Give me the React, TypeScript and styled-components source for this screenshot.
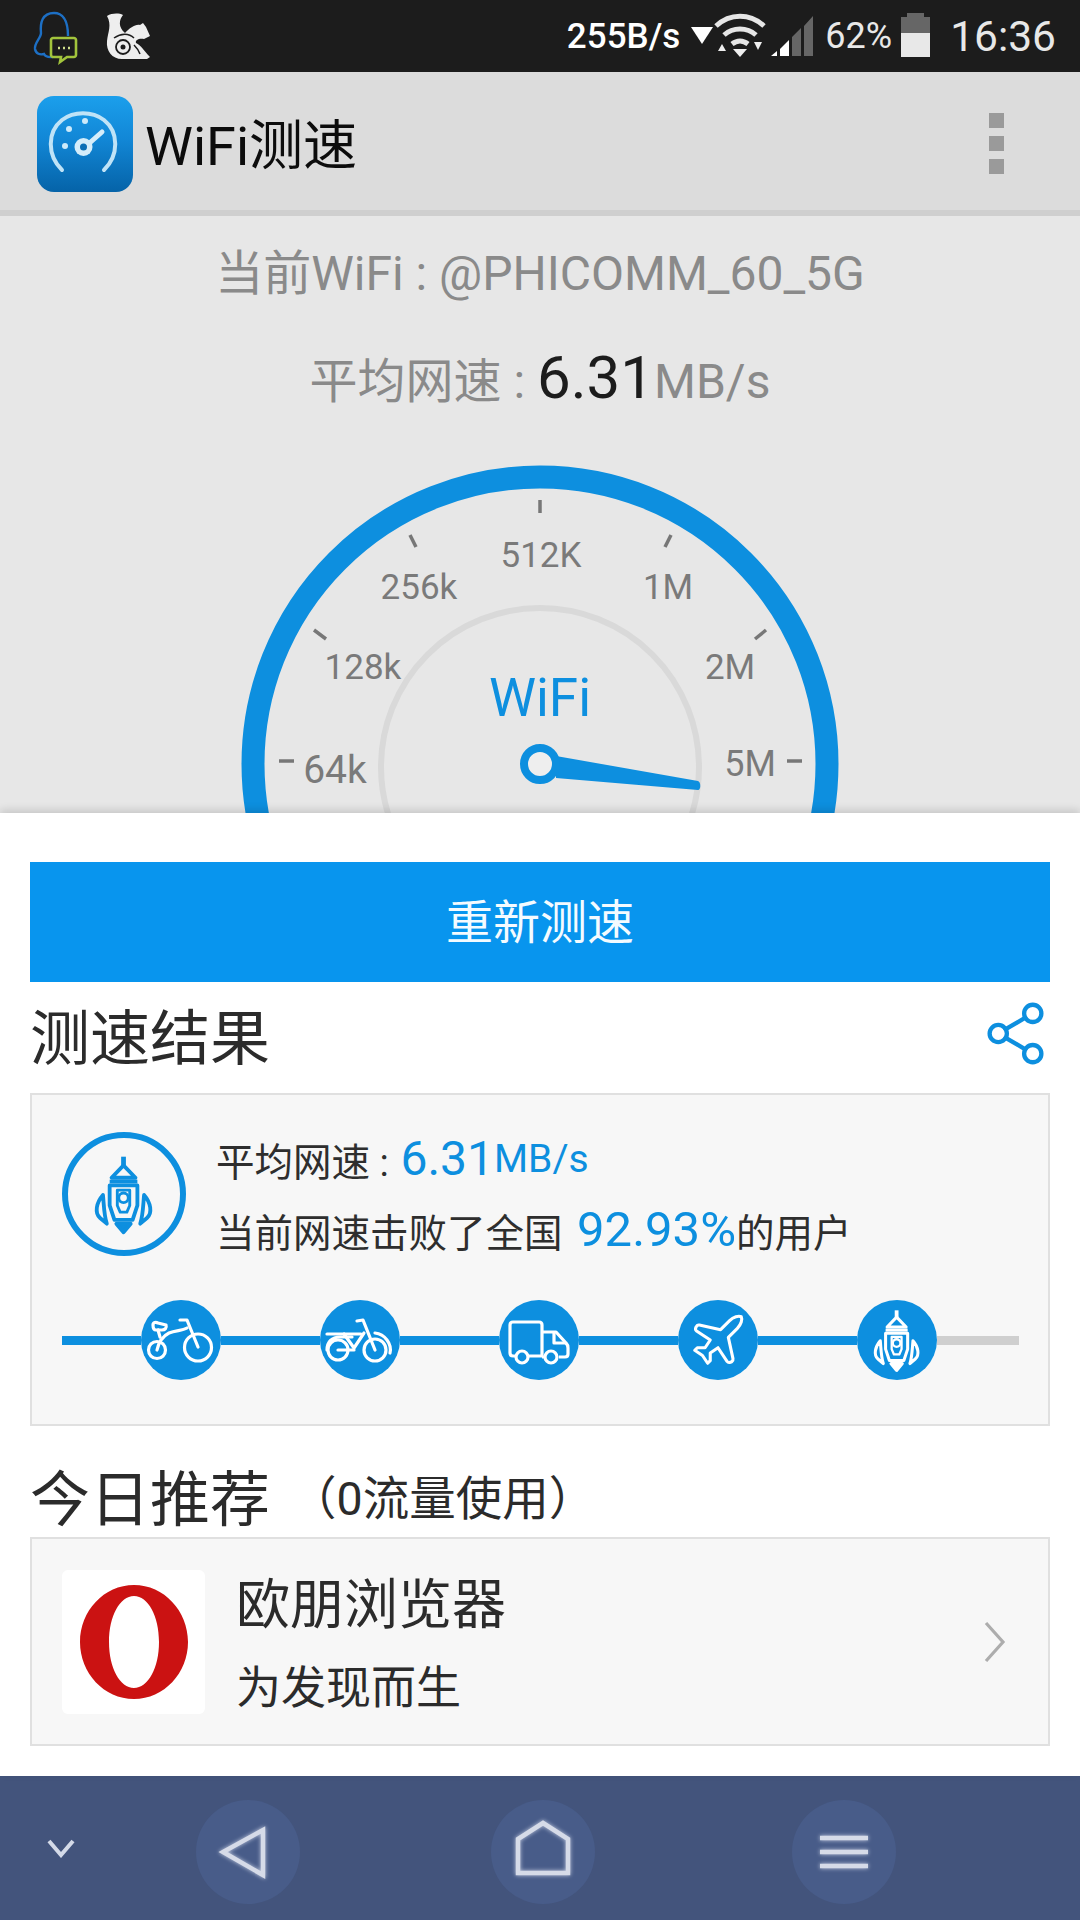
import React from 'react';
import styled, { createGlobalStyle } from 'styled-components';
import { Plane, Share2 } from 'lucide-react';

const FONT = `Roboto, "Noto Sans CJK SC", sans-serif`;
const BLUE = '#0d8fdf';

const GlobalStyle = createGlobalStyle`
  html, body {
    margin: 0;
    padding: 0;
    background: #fff;
    font-family: ${FONT};
  }
`;

const Rocket = ({ size, color }: { size: number; color: string }) => (
  <svg width={size} height={size} viewBox="30 22 78 92" fill="none" stroke={color} strokeWidth="4" strokeLinejoin="round">
    <path d="M68.5 29v9" strokeWidth="5" />
    <path d="M68.5 38 56 51h25z" />
    <path d="M54 55h29" />
    <path d="M54 59h29v21l-5 15H59l-5-15z" />
    <path d="M62 64h13v16l-3 7h-7l-3-7z" strokeWidth="3" />
    <circle cx="68.5" cy="72" r="5" strokeWidth="3" />
    <path d="M47 69c-7 8-9 19-3 24l7 6c-3-9-3-20-4-30zM90 69c7 8 9 19 3 24l-7 6c3-9 3-20 4-30z" />
    <path d="M61 99h15l-7.500 9z" fill={color} />
  </svg>
);

const Bicycle = () => (
  <svg width="80" height="80" viewBox="0 0 80 80" fill="none" stroke="#fff" strokeWidth="3.2" strokeLinecap="round" strokeLinejoin="round">
    <circle cx="16" cy="50" r="8.500" />
    <circle cx="57" cy="47.500" r="13.500" />
    <path d="M16 50c2-9 6-14 12-17 7-3 13-2 18-5" />
    <path d="M39 20h7l11 27" />
    <path d="M12 25c0-3 3-3 5-2l8 2c1 3-1 5-4 5h-6c-2 0-3-2-3-5z" />
    <path d="M17 30l2 7" />
  </svg>
);

const Motorbike = () => (
  <svg width="80" height="80" viewBox="0 0 80 80" fill="none" stroke="#fff" strokeWidth="3.2" strokeLinecap="round" strokeLinejoin="round">
    <circle cx="18" cy="50" r="10" />
    <circle cx="55" cy="50" r="11" />
    <path d="M7 50c0-8 5-13 13-13h12" />
    <path d="M70 53c2-9-5-19-15-20" />
    <path d="M37 21l6-1 12 30" />
    <path d="M7 34h34" />
    <path d="M24 34l10 14 10-15" />
    <path d="M18 50h16" />
  </svg>
);

const Truck = () => (
  <svg width="80" height="80" viewBox="0 0 80 80" fill="none" stroke="#fff" strokeWidth="3.200" strokeLinejoin="round">
    <path d="M16 56h-2c-2 0-3-1-3-3V25c0-2 1-3 3-3h26c2 0 3 1 3 3v31H29" />
    <path d="M43 32h14l10 11c1 1 2 3 2 5v6c0 2-1 3-3 3h-6M46 57h-3" />
    <path d="M55 33v10h12" />
    <circle cx="23" cy="57" r="6" />
    <circle cx="52" cy="57" r="6" />
  </svg>
);

const QQIcon = () => (
  <svg width="60" height="60" viewBox="0 0 60 60" fill="none">
    <path d="M48 31C48 14 42 8 34 8 22 8 20 18 21 28c0 5-7 10-6 16 1 5 5 6 9 5 2 4 6 3 9 3" stroke="#1d6fc4" strokeWidth="2.400" />
    <path d="M33 33h21c1 0 2 1 2 2v15c0 1-1 2-2 2H47l-7 5 1-5h-8c-1 0-2-1-2-2V35c0-1 1-2 2-2z" fill="#1c1c1c" stroke="#a2c43c" strokeWidth="2.600" />
    <path d="M38 43h2M43 43h2M48 43h2" stroke="#cfe08a" strokeWidth="2.600" />
  </svg>
);

const UCIcon = () => (
  <svg width="48" height="48" viewBox="83 8 46 48">
    <path
      d="M85 12c5-3 12-3 16-1-4 5-5 12 2 18 5-5 10-9 15-8l3-2 3 4 4 9-6 3c-5-1-9 1-8 4 5 2 8 8 14 14l-3 2H100c-10 0-16-8-15-18 1-9 5-16 0-25z"
      fill="#eee"
    />
    <circle cx="101" cy="43" r="7" fill="none" stroke="#1c1c1c" strokeWidth="1.800" />
    <circle cx="101" cy="43" r="2.500" fill="#1c1c1c" />
    <path d="M92 34c7-5 15-5 20 0M112 41c3 3 5 6 6 9" fill="none" stroke="#1c1c1c" strokeWidth="1.500" />
  </svg>
);

const NetIcons = () => (
  <svg width="132" height="65" viewBox="0 0 132 65">
    <path d="M8 23h22l-11 17z" fill="#fff" />
    <g fill="none" stroke="#e6e6e6" strokeWidth="5">
      <path d="M33 22c14-13 34-13 48 0" />
      <path d="M41 31c9-8 23-8 32 0" />
      <path d="M49 40c5-4 11-4 16 0" />
    </g>
    <path d="M50 45h14l-7 8z" fill="#eee" />
    <path d="M35 47l4-7 4 7zM71 38h8l-4 8z" fill="#eee" />
    <path d="M88 52l6-5v5z" fill="#fff" />
    <path d="M97 52V45l9-9v16z" fill="#fff" />
    <path d="M109 52V33l9-9v28zM121 52V22l9-10v40z" fill="#666" />
  </svg>
);

const BatteryIcon = () => (
  <svg width="29" height="46" viewBox="0 0 29 46">
    <path d="M6 0h17v4h6v16H0V4h6z" fill="#666" />
    <path d="M0 20h29v24H0z" fill="#e8e8e8" />
  </svg>
);

const AppLogo = () => (
  <LogoSvg width="96" height="96" viewBox="0 0 96 96">
    <defs>
      <linearGradient id="appBg" x1="0" y1="0" x2="0" y2="1">
        <stop offset="0" stopColor="#1b9fec" />
        <stop offset="0.45" stopColor="#1287d6" />
        <stop offset="1" stopColor="#0563a8" />
      </linearGradient>
    </defs>
    <rect width="96" height="96" rx="17" fill="url(#appBg)" />
    <path d="M25 74C10 59 10 36 25 24c12-9 30-9 42 0 15 12 15 35 0 50" fill="none" stroke="#bfe3f7" strokeWidth="4" strokeLinecap="round" />
    <circle cx="28" cy="50" r="3" fill="#cdeafa" />
    <circle cx="32" cy="33" r="3" fill="#cdeafa" />
    <circle cx="48" cy="25" r="3" fill="#cdeafa" />
    <path d="M48 51l17-15" stroke="#d5edfa" strokeWidth="5" strokeLinecap="round" />
    <circle cx="46.500" cy="51" r="9" fill="#d5edfa" />
    <circle cx="46.500" cy="51" r="3.500" fill="#0b6fb6" />
  </LogoSvg>
);

const gaugeLabels = [
  { text: '512K', x: 541, y: 567, size: 35 },
  { text: '256k', x: 419, y: 599, size: 35 },
  { text: '1M', x: 668, y: 599, size: 35 },
  { text: '128k', x: 363, y: 679, size: 35 },
  { text: '2M', x: 730, y: 679, size: 35 },
  { text: '64k', x: 335, y: 783, size: 39 },
  { text: '5M', x: 750, y: 776, size: 36 },
];

const gaugeTicks = [
  'M540 500v13',
  'M410 535l6 12',
  'M671 535l-6 12',
  'M314 630l12 9',
  'M766 630l-11 9',
  'M279 761h15',
  'M787 761h15',
];

const Gauge = () => (
  <GaugeSvg width="640" height="373" viewBox="220 440 640 373">
    <circle cx="540" cy="764" r="287" fill="none" stroke={BLUE} strokeWidth="23" />
    <circle cx="540" cy="767" r="159" fill="none" stroke="#d9d9d9" strokeWidth="6" />
    {gaugeTicks.map((d) => (
      <path key={d} d={d} stroke="#777" strokeWidth="3.500" fill="none" />
    ))}
    {gaugeLabels.map((l) => (
      <text key={l.text} x={l.x} y={l.y} textAnchor="middle" fontSize={l.size} fill="#7a7a7a">
        {l.text}
      </text>
    ))}
    <text x="540" y="716" textAnchor="middle" fontSize="53" fill={BLUE}>
      WiFi
    </text>
    <path d="M556 756l142 25c3 1 3 9 0 9l-142-12z" fill={BLUE} />
    <circle cx="540" cy="764" r="16" fill="#eee" stroke={BLUE} strokeWidth="8" />
  </GaugeSvg>
);

const levels = [
  <Bicycle key="bike" />,
  <Motorbike key="moto" />,
  <Truck key="truck" />,
  <Plane key="plane" size={62} strokeWidth={1.2} color="#fff" />,
  <Rocket key="rocket" size={70} color="#fff" />,
];

const App = () => {
  return (
    <Page>
      <GlobalStyle />
      <StatusBar>
        <StatusLeft>
          <QQIcon />
          <UCIcon />
        </StatusLeft>
        <StatusRight>
          <Speed>255B/s</Speed>
          <NetIcons />
          <Percent>62%</Percent>
          <BatteryIcon />
          <Clock>16:36</Clock>
        </StatusRight>
      </StatusBar>

      <Header>
        <AppLogo />
        <AppTitle>WiFi测速</AppTitle>
        <MenuDots>
          <span />
          <span />
          <span />
        </MenuDots>
      </Header>

      <GaugePanel>
        <WifiName>当前WiFi : @PHICOMM_60_5G</WifiName>
        <AvgSpeed>
          平均网速 : <strong>6.31</strong>MB/s
        </AvgSpeed>
        <Gauge />
      </GaugePanel>

      <Sheet>
        <RetestButton>重新测速</RetestButton>

        <SectionHead>
          <SectionTitle>测速结果</SectionTitle>
          <Share2 size={69} strokeWidth={1.5} color={BLUE} />
        </SectionHead>

        <ResultCard>
          <ResultTop>
            <RocketRing>
              <Rocket size={88} color={BLUE} />
            </RocketRing>
            <ResultText>
              <ResultLine>
                平均网速 : <BigNum $size={48} $gap={2}>6.31</BigNum>
                <BigNum $size={39}>MB/s</BigNum>
              </ResultLine>
              <ResultLine>
                当前网速击败了全国 <BigNum $size={49} $gap={5}>92.93%</BigNum>的用户
              </ResultLine>
            </ResultText>
          </ResultTop>
          <Track>
            <TrackLine $w={79} />
            {levels.map((icon, i) => (
              <React.Fragment key={i}>
                <LevelDot>{icon}</LevelDot>
                {i < levels.length - 1 ? <TrackLine $w={99} /> : <TrackLine $w={82} $off />}
              </React.Fragment>
            ))}
          </Track>
        </ResultCard>

        <SectionHead $lower>
          <SectionTitle>
            今日推荐<SectionNote>（0流量使用）</SectionNote>
          </SectionTitle>
        </SectionHead>

        <PromoCard>
          <OperaBox>
            <svg width="108" height="114" viewBox="0 0 108 114">
              <path
                fillRule="evenodd"
                d="M54 0c30 0 54 26 54 57s-24 57-54 57S0 88 0 57 24 0 54 0zm0 11c-14 0-25 20-25 46s11 46 25 46 25-20 25-46-11-46-25-46z"
                fill="#cb1212"
              />
            </svg>
          </OperaBox>
          <PromoText>
            <PromoName>欧朋浏览器</PromoName>
            <PromoSlogan>为发现而生</PromoSlogan>
          </PromoText>
          <Chevron width="22" height="42" viewBox="0 0 22 42">
            <path d="M2 2l17 19L2 40" fill="none" stroke="#adadad" strokeWidth="3.200" />
          </Chevron>
        </PromoCard>
      </Sheet>

      <NavBar>
        <NavCell>
          <svg width="34" height="20" viewBox="0 0 34 20">
            <path d="M5 3l12 14L29 3" fill="none" stroke="#d4dae8" strokeWidth="4" />
          </svg>
        </NavCell>
        <NavCell>
          <NavButton>
            <NavSvg width="60" height="70" viewBox="0 0 60 70">
              <path d="M45 13v45L5 35z" />
            </NavSvg>
          </NavButton>
        </NavCell>
        <NavCell>
          <NavButton>
            <NavSvg width="60" height="70" viewBox="0 0 60 70">
              <path d="M30 6l25 16v34H5V22z" />
            </NavSvg>
          </NavButton>
        </NavCell>
        <NavCell>
          <NavButton>
            <NavSvg width="60" height="70" viewBox="0 0 60 70">
              <path d="M6 21h48M6 35h48M6 49h48" />
            </NavSvg>
          </NavButton>
        </NavCell>
      </NavBar>
    </Page>
  );
};

const Page = styled.div`
  width: 1080px;
  height: 1920px;
  display: flex;
  flex-direction: column;
  overflow: hidden;
  font-family: ${FONT};
`;

const StatusBar = styled.div`
  height: 72px;
  flex: none;
  background: #1c1c1c;
  display: flex;
  align-items: center;
  justify-content: space-between;
  padding: 0 24px 0 20px;
  color: #e8e8e8;
`;

const StatusLeft = styled.div`
  display: flex;
  align-items: center;
  & > svg:first-child {
    margin-top: -2px;
  }
  & > svg:last-child {
    margin-left: 24px;
  }
`;

const StatusRight = styled.div`
  display: flex;
  align-items: center;
`;

const Speed = styled.span`
  font-size: 35px;
  font-weight: 500;
  color: #fff;
  margin-right: 3px;
`;

const Percent = styled.span`
  font-size: 36px;
  margin: 0 9px 0 10px;
`;

const Clock = styled.span`
  font-size: 42.500px;
  margin-left: 20px;
`;

const Header = styled.div`
  height: 138px;
  flex: none;
  background: #dcdcdc;
  border-bottom: 6px solid #cfcfcf;
  display: flex;
  align-items: center;
  padding: 0 76px 0 37px;
`;

const LogoSvg = styled.svg`
  flex: none;
  margin-top: 6px;
`;

const AppTitle = styled.div`
  font-size: 54px;
  color: #0c0c0c;
  margin-left: 12px;
  flex: 1;
`;

const MenuDots = styled.div`
  display: flex;
  flex-direction: column;
  gap: 8px;
  margin-top: 4px;
  span {
    display: block;
    width: 15px;
    height: 15px;
    background: #9a9a9a;
  }
`;

const GaugePanel = styled.div`
  height: 597px;
  flex: none;
  background: #e7e7e7;
  display: flex;
  flex-direction: column;
  align-items: center;
  overflow: hidden;
`;

const WifiName = styled.div`
  margin-top: 28px;
  height: 60px;
  line-height: 60px;
  font-size: 48px;
  color: #8a8a8a;
`;

const AvgSpeed = styled.div`
  margin-top: 36px;
  height: 76px;
  line-height: 76px;
  font-size: 48px;
  color: #8a8a8a;
  strong {
    font-weight: 400;
    font-size: 60px;
    color: #1c1c1c;
  }
`;

const GaugeSvg = styled.svg`
  margin-top: 24px;
  flex: none;
  font-family: ${FONT};
`;

const Sheet = styled.div`
  flex: 1;
  background: #fff;
  padding: 49px 30px 0;
  box-shadow: 0 -3px 8px rgba(0, 0, 0, 0.14);
  position: relative;
`;

const RetestButton = styled.div`
  height: 112px;
  padding-bottom: 8px;
  background: #0895ee;
  color: #f4fbff;
  font-size: 47px;
  display: flex;
  align-items: center;
  justify-content: center;
`;

const SectionHead = styled.div<{ $lower?: boolean }>`
  height: ${(p) => (p.$lower ? 85 : 103)}px;
  padding-top: ${(p) => (p.$lower ? 26 : 0)}px;
  padding-bottom: ${(p) => (p.$lower ? 0 : 8)}px;
  display: flex;
  align-items: center;
  justify-content: space-between;
`;

const SectionTitle = styled.div`
  font-size: 60px;
  color: #2b2b2b;
  display: flex;
  align-items: center;
`;

const SectionNote = styled.span`
  font-size: 46.500px;
  margin-left: 20px;
`;

const ResultCard = styled.div`
  height: 333px;
  box-sizing: border-box;
  background: #f7f7f7;
  border: 2px solid #e0e0e0;
  padding: 28px 30px 0;
`;

const ResultTop = styled.div`
  display: flex;
  align-items: center;
`;

const RocketRing = styled.div`
  width: 124px;
  height: 124px;
  box-sizing: border-box;
  flex: none;
  border: 6px solid ${BLUE};
  border-radius: 50%;
  display: flex;
  align-items: center;
  justify-content: center;
`;

const ResultText = styled.div`
  margin-left: 30px;
`;

const ResultLine = styled.div`
  height: 71px;
  display: flex;
  align-items: center;
  white-space: pre;
  font-size: 38.500px;
  color: #2e2e2e;
`;

const BigNum = styled.span<{ $size: number; $gap?: number }>`
  font-size: ${(p) => p.$size}px;
  margin-left: ${(p) => p.$gap ?? 0}px;
  color: ${BLUE};
`;

const Track = styled.div`
  margin-top: 35px;
  display: flex;
  align-items: center;
`;

const TrackLine = styled.div<{ $w: number; $off?: boolean }>`
  width: ${(p) => p.$w}px;
  height: 9px;
  flex: none;
  background: ${(p) => (p.$off ? '#cfcfcf' : BLUE)};
`;

const LevelDot = styled.div`
  width: 80px;
  height: 80px;
  flex: none;
  border-radius: 50%;
  background: ${BLUE};
  display: flex;
  align-items: center;
  justify-content: center;
`;

const PromoCard = styled.div`
  height: 209px;
  box-sizing: border-box;
  background: #f7f7f7;
  border: 2px solid #e0e0e0;
  padding: 0 42px 0 30px;
  display: flex;
  align-items: center;
`;

const OperaBox = styled.div`
  width: 143px;
  height: 144px;
  flex: none;
  background: #fff;
  border-radius: 6px;
  display: flex;
  align-items: center;
  justify-content: center;
`;

const PromoText = styled.div`
  flex: 1;
  margin: 10px 0 0 31px;
`;

const PromoName = styled.div`
  font-size: 54px;
  line-height: 83px;
  color: #2b2b2b;
`;

const PromoSlogan = styled.div`
  font-size: 45px;
  line-height: 83px;
  color: #2b2b2b;
`;

const Chevron = styled.svg`
  flex: none;
`;

const NavBar = styled.div`
  height: 144px;
  flex: none;
  background: #43547c;
  display: grid;
  grid-template-columns: 196px 295px 301px 1fr;
  align-items: center;
`;

const NavCell = styled.div`
  display: flex;
  align-items: center;
  margin-top: 8px;
  &:first-child {
    padding-left: 44px;
    margin-top: 0;
  }
`;

const NavButton = styled.div`
  width: 104px;
  height: 104px;
  border-radius: 50%;
  background: #485c89;
  display: flex;
  align-items: center;
  justify-content: center;
`;

const NavSvg = styled.svg`
  fill: none;
  stroke: #d6dbe8;
  stroke-width: 4.500px;
  filter: drop-shadow(0 0 2px #c4cce0);
`;

export default App;
